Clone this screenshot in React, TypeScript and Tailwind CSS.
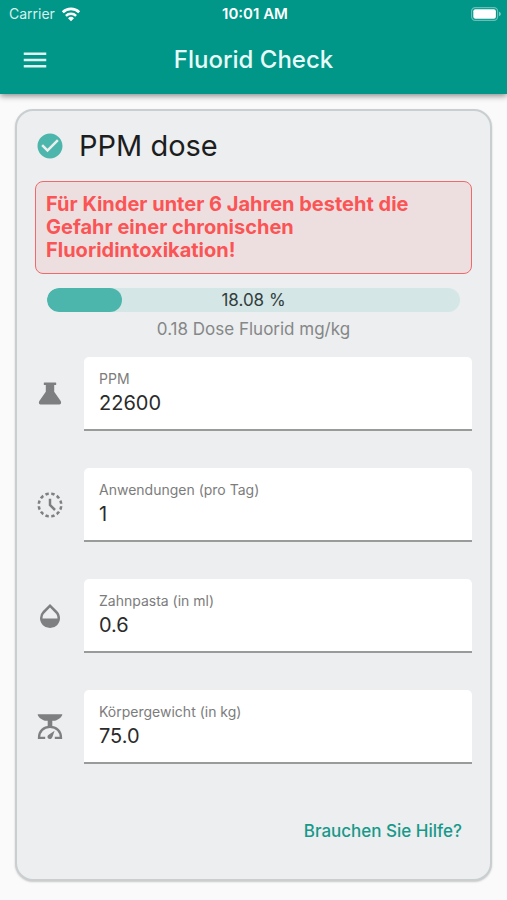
import React, { useState } from 'react';
import { MdCheckCircle, MdHistoryToggleOff, MdMenu, MdOpacity } from 'react-icons/md';

interface DoseFieldProps {
  id: string;
  label: string;
  value: string;
  icon: React.ReactNode;
  onUpdate: (id: string, value: string) => void;
}

const FlaskIcon = () => (
  <svg viewBox="0 0 30 30" className="size-[30px]" fill="currentColor" aria-hidden="true">
    <path d="M9.4 3.400h11.200c.4 0 .6.200.6.600v1.400c0 .4-.2.600-.6.600h-1.400v6.800l6.300 8.900c1.300 1.900.4 3.900-1.700 3.900H6.200c-2.100 0-3-2-1.700-3.900l6.300-8.900V6H9.400c-.4 0-.6-.2-.6-.6V4c0-.4.2-.6.6-.6z" />
  </svg>
);

const ScaleIcon = () => (
  <svg viewBox="0 0 30 30" className="size-[30px]" fill="currentColor" aria-hidden="true">
    <path d="M2.700 2.200h24.600c0 2.300-3.300 5.300-7.300 6.600h-2.700v5.400h-4.600V8.800H10C6 7.500 2.700 4.500 2.700 2.200z" />
    <path
      d="M10.200 25.800H4C4 19.200 8.500 14.900 15 14.900s11 4.300 11 10.900h-6.200"
      fill="none"
      stroke="currentColor"
      strokeWidth="2.3"
    />
    <path d="M19.600 18.800l-2.200 6.300c-.5 1.400-1.400 2.100-2.600 2-1.500-.1-2.500-1.200-2.300-2.500.1-.8.500-1.400 1.200-1.900z" />
  </svg>
);

const WifiIcon = () => (
  <svg viewBox="0 0 20 15" className="h-[15px] w-5" fill="none" stroke="white" aria-hidden="true">
    <path d="M1.8 5.3a11.7 11.7 0 0 1 16.4 0" strokeWidth="2.7" />
    <path d="M4.9 8.8a7.3 7.3 0 0 1 10.2 0" strokeWidth="2.5" />
    <path d="M10 14.3l-3-3.1a4.3 4.3 0 0 1 6 0z" fill="white" stroke="none" />
  </svg>
);

const BatteryIcon = () => (
  <svg viewBox="0 0 30 14" className="h-[14px] w-[30px]" aria-hidden="true">
    <rect x="0.6" y="0.6" width="26" height="12.8" rx="3.6" fill="none" stroke="white" strokeOpacity="0.4" strokeWidth="1.2" />
    <rect x="2.3" y="2.3" width="22.6" height="9.4" rx="2" fill="white" />
    <path d="M28 4.8c1.2.4 1.8 1.2 1.8 2.2s-.6 1.800-1.800 2.200z" fill="white" fillOpacity="0.5" />
  </svg>
);

const DoseField: React.FC<DoseFieldProps> = ({ id, label, value, icon, onUpdate }) => {
  return (
    <div className="flex items-center">
      <div className="w-[49px] shrink-0 text-[#7d7f80]">{icon}</div>
      <div className="flex h-[74px] min-w-0 flex-1 flex-col rounded-t-[5px] border-b-2 border-[#999b9b] bg-white px-[15px] pt-3">
        <label htmlFor={id} className="text-sm leading-5 text-[#7c7c7c]">
          {label}
        </label>
        <input
          id={id}
          type="text"
          inputMode="decimal"
          value={value}
          onChange={(e) => onUpdate(id, e.target.value)}
          className="w-full text-xl leading-7 text-[#2b2b2b] outline-none"
        />
      </div>
    </div>
  );
};

const App: React.FC = () => {
  const [values, setValues] = useState<Record<string, string>>({
    ppm: '22600',
    applications: '1',
    toothpaste: '0.6',
    weight: '75.0'
  });

  const percent = 18.08;

  const fields = [
    { id: 'ppm', label: 'PPM', icon: <FlaskIcon /> },
    { id: 'applications', label: 'Anwendungen (pro Tag)', icon: <MdHistoryToggleOff className="size-[30px]" /> },
    { id: 'toothpaste', label: 'Zahnpasta (in ml)', icon: <MdOpacity className="size-[30px]" /> },
    { id: 'weight', label: 'Körpergewicht (in kg)', icon: <ScaleIcon /> }
  ];

  const handleUpdate = (id: string, value: string) => {
    setValues((prev) => ({ ...prev, [id]: value }));
  };

  return (
    <div className="min-h-screen bg-[#fafafa] font-['Inter',sans-serif]">
      <header className="bg-[#009688] text-white shadow-[0_2px_6px_rgba(0,0,0,0.45)]">
        <div className="grid h-7 grid-cols-3 items-center pr-[6px] pl-[9px] text-sm">
          <div className="flex items-center gap-[6px] text-[#d9f0ed]">
            <span>Carrier</span>
            <WifiIcon />
          </div>
          <div className="text-center text-[15px] font-semibold">10:01 AM</div>
          <div className="flex justify-end">
            <BatteryIcon />
          </div>
        </div>
        <div className="grid h-[66px] grid-cols-[30px_1fr_30px] items-center px-5 pb-[2px]">
          <button type="button" aria-label="Menu" className="text-[#e0f5f2]">
            <MdMenu className="size-[30px]" />
          </button>
          <h1 className="text-center text-2xl font-medium text-[#e6fbf8]">Fluorid Check</h1>
        </div>
      </header>

      <main className="px-[15px] pt-[15px] pb-[19px]">
        <section className="rounded-[18px] border-2 border-[#c9cfd1] bg-[#eceeef] px-[18px] pb-[26px] shadow-[0_1px_2px_rgba(0,0,0,0.2)]">
          <div className="flex h-[70px] items-center gap-[14px]">
            <MdCheckCircle className="size-[30px] text-[#4db6ac]" />
            <h2 className="text-[29px] text-[#1c1d1e]">PPM dose</h2>
          </div>

          <p
            role="alert"
            className="rounded-lg border border-[#f0696b] bg-[#eddfe0] px-[10px] pt-[11px] pb-[11px] text-xl leading-[23px] font-bold text-[#fb5455]"
          >
            Für Kinder unter 6 Jahren besteht die Gefahr einer chronischen Fluoridintoxikation!
          </p>

          <div className="mx-3 mt-[14px] grid h-6 overflow-hidden rounded-full bg-[#d4e6e6]">
            <div
              className="col-start-1 row-start-1 rounded-full bg-[#4db6ac]"
              style={{ width: `${percent}%` }}
            />
            <span className="col-start-1 row-start-1 text-center text-[17px] leading-6 text-[#333d3d]">
              {percent} %
            </span>
          </div>
          <p className="mt-[5px] text-center text-[17px] leading-6 text-[#858788]">0.18 Dose Fluorid mg/kg</p>

          <div className="mt-4 flex flex-col gap-[37px]">
            {fields.map((field) => (
              <DoseField key={field.id} {...field} value={values[field.id]} onUpdate={handleUpdate} />
            ))}
          </div>

          <div className="mt-[45px] flex justify-end pr-[10px]">
            <button type="button" className="py-1 text-[17px] leading-9 font-medium text-[#17998a]">
              Brauchen Sie Hilfe?
            </button>
          </div>
        </section>
      </main>
    </div>
  );
};

export default App;
